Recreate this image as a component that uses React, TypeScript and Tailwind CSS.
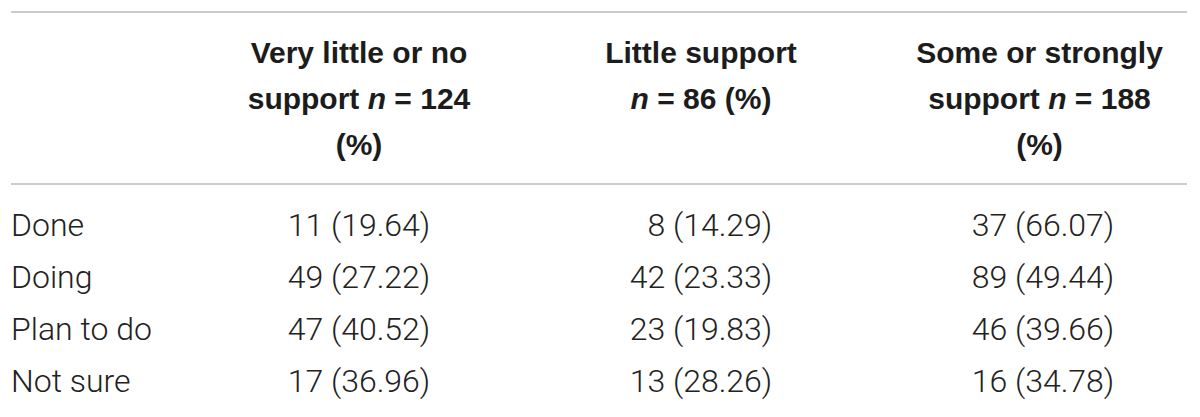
const rows = [
  { label: "Done", a: "11 (19.64)", b: "8 (14.29)", c: "37 (66.07)" },
  { label: "Doing", a: "49 (27.22)", b: "42 (23.33)", c: "89 (49.44)" },
  { label: "Plan to do", a: "47 (40.52)", b: "23 (19.83)", c: "46 (39.66)" },
  { label: "Not sure", a: "17 (36.96)", b: "13 (28.26)", c: "16 (34.78)" },
];

// pads single-digit counts so the columns line up like a typeset table
const Num = ({ value }: { value: string }) => {
  const pad = value.indexOf(" ") === 1;
  return (
    <span>
      {pad && <span className="invisible">0</span>}
      {value}
    </span>
  );
};

const App = () => {
  return (
    <div className="w-[1200px] h-[417px] bg-white pt-[11px] font-['Liberation_Sans',Arial,sans-serif]">
      <div className="w-[1176px] ml-[11px] border-t-2 border-[#cbcbcb]">
        <div className="grid grid-cols-[177px_342px_342px_1fr] pt-[17px] pb-[15px] border-b-2 border-[#cbcbcb] text-[30px] leading-[46px] font-bold text-[#1c1c1c] text-center">
          <div></div>
          <div>
            Very little or no
            <br />
            support <i>n</i> = 124
            <br />
            (%)
          </div>
          <div>
            Little support
            <br />
            <i>n</i> = 86 (%)
          </div>
          <div className="pl-[20px]">
            Some or strongly
            <br />
            support <i>n</i> = 188
            <br />
            (%)
          </div>
        </div>
        <div className="pt-[14px] text-[32px] leading-[52px] font-light text-[#222] font-['Roboto','Liberation_Sans',sans-serif]">
          {rows.map((r) => (
            <div key={r.label} className="grid grid-cols-[177px_342px_342px_1fr]">
              <div>{r.label}</div>
              <div className="text-center">
                <Num value={r.a} />
              </div>
              <div className="text-center">
                <Num value={r.b} />
              </div>
              <div className="text-center pl-[27px]">
                <Num value={r.c} />
              </div>
            </div>
          ))}
        </div>
      </div>
    </div>
  );
};

export default App;
